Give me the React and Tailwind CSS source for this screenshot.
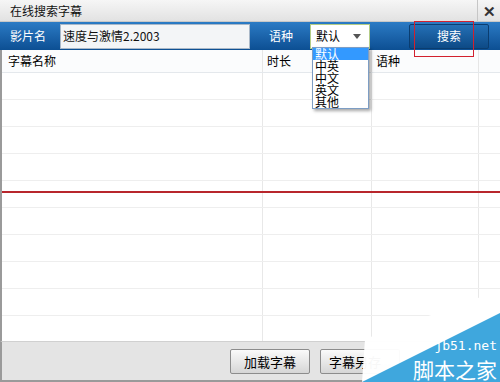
export default function App() {
  const font = { fontFamily: '"Noto Sans CJK SC", "Liberation Sans", sans-serif' };
  const rows = Array.from({ length: 10 });
  return (
    <div className="relative w-[500px] h-[382px] overflow-hidden bg-white flex flex-col text-[12px] text-black" style={font}>
      {/* Title bar */}
      <div className="h-[22px] flex items-stretch bg-gradient-to-b from-[#f6f6f6] to-[#e2e2e2] border-b border-[#c8c8c8]">
        <div className="flex-1 flex items-center pl-[10px] leading-none text-[12px] text-[#111]">在线搜索字幕</div>
        <div className="w-[23px] border-l border-[#c6c6c6] flex items-center justify-center text-[15px] font-bold text-[#333] leading-none">✕</div>
      </div>
      {/* Blue search bar */}
      <div className="h-[28px] flex items-center bg-gradient-to-b from-[#2b7bc5] to-[#0c4f93]">
        <div className="w-[60px] pl-[10px] text-white leading-none">影片名</div>
        <div className="w-[190px] h-[25px] bg-[#f3f5f7] border border-[#a9b8c8] flex items-center pl-[2px] text-[#111] leading-none">速度与激情2.2003</div>
        <div className="w-[60px] pl-[19px] text-white leading-none">语种</div>
        <div className="w-[60px] h-[25px] bg-white border border-[#b4cc86] flex items-center justify-between pl-[5px] pr-[8px] leading-none">
          <span>默认</span>
          <svg width="8" height="5" viewBox="0 0 8 5"><path d="M0 0h8L4 5z" fill="#555" /></svg>
        </div>
        <div className="w-[39px]" />
        <div className="w-[80px] h-[25px] rounded-[2px] border border-[#0a3d70] bg-gradient-to-b from-[#2470b6] to-[#0d4a86] flex items-center justify-center text-white leading-none">搜索</div>
      </div>
      {/* Table */}
      <div className="flex-1 flex flex-col border-l-2 border-[#9a9a9a] overflow-hidden relative">
        <div className="h-[23px] shrink-0 flex bg-[#fbfcfd] border-b border-[#e4e8ec]">
          <div className="w-[261px] border-r border-[#e6e6e6] flex items-center pl-[6px] leading-none">字幕名称</div>
          <div className="w-[109px] border-r border-[#e6e6e6] flex items-center pl-[4px] leading-none">时长</div>
          <div className="w-[107px] border-r border-[#e6e6e6] flex items-center pl-[4px] leading-none">语种</div>
          <div className="flex-1" />
        </div>
        <div className="flex-1 overflow-hidden">
          {rows.map((_, i) => (
            <div key={i} className="h-[27px] flex border-b border-[#eeeeee]">
              <div className="w-[261px] border-r border-[#e8e8e8]" />
              <div className="w-[109px] border-r border-[#e8e8e8]" />
              <div className="w-[107px] border-r border-[#e8e8e8]" />
              <div className="flex-1" />
            </div>
          ))}
        </div>
        <div className="absolute left-0 right-0 top-[141px] h-[2px] bg-[#b8262c]" />
      </div>
      {/* Footer */}
      <div className="h-[41px] shrink-0 bg-[#e4e4e4] border-t border-[#d0d0d0] border-l-2 border-l-[#9a9a9a] border-b-2 border-b-[#9a9a9a] flex items-center pl-[228px] gap-[10px]">
        <div className="w-[80px] h-[25px] rounded-[2px] border border-[#8c8c8c] bg-gradient-to-b from-[#fafafa] to-[#d6d6d6] flex items-center justify-center leading-none text-[13px]">加载字幕</div>
        <div className="w-[80px] h-[25px] rounded-[2px] border border-[#8c8c8c] bg-gradient-to-b from-[#fafafa] to-[#d6d6d6] flex items-center justify-start pl-[8px] leading-none text-[13px]">字幕另存</div>
      </div>

      {/* Dropdown list overlay */}
      <div className="absolute left-[312px] top-[47px] w-[57px] bg-white border border-[#7d9dc4] shadow-[2px_2px_3px_rgba(0,0,0,0.35)] text-[12px] leading-[12px]">
        <div className="bg-[#3399ff] text-white pl-[2px] h-[12px]">默认</div>
        <div className="pl-[2px] h-[12px]">中英</div>
        <div className="pl-[2px] h-[12px]">中文</div>
        <div className="pl-[2px] h-[12px]">英文</div>
        <div className="pl-[2px] h-[12px]">其他</div>
      </div>

      {/* Red annotation rectangle */}
      <div className="absolute left-[414px] top-[21px] w-[60px] h-[36px] border border-[#d2202e]" />

      {/* Watermark */}
      <svg className="absolute right-0 bottom-0" width="140" height="95" viewBox="0 0 140 95">
        <polygon points="2,95 5,52 140,3 140,95" fill="#ffffff" opacity="0.97" />
        <polygon points="2,95 140,26 140,95" fill="#3fa7dd" />
      </svg>
      <div className="absolute right-[3px] bottom-[30px] text-white text-[13px] leading-none" style={{ fontFamily: '"DejaVu Sans Mono", monospace' }}>jb51.net</div>
      <div className="absolute right-[3px] bottom-[2px] text-white text-[21px] leading-none" style={font}>脚本之家</div>
    </div>
  );
}
